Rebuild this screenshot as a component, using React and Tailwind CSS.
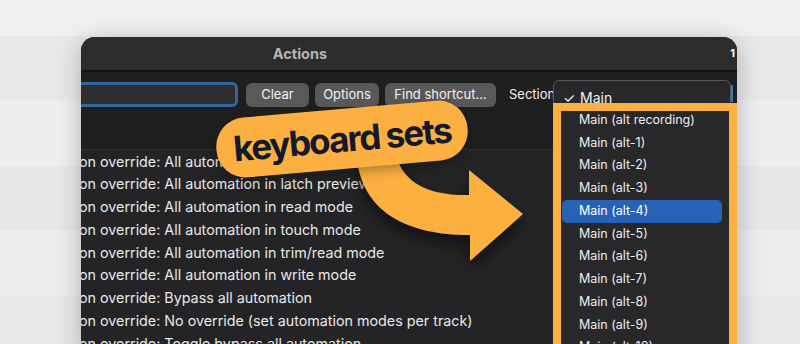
import React from "react";

const rows = [
  "on override: All automation in latch mode",
  "on override: All automation in latch preview mode",
  "on override: All automation in read mode",
  "on override: All automation in touch mode",
  "on override: All automation in trim/read mode",
  "on override: All automation in write mode",
  "on override: Bypass all automation",
  "on override: No override (set automation modes per track)",
  "on override: Toggle bypass all automation",
];

const sections = [
  "Main (alt recording)",
  "Main (alt-1)",
  "Main (alt-2)",
  "Main (alt-3)",
  "Main (alt-4)",
  "Main (alt-5)",
  "Main (alt-6)",
  "Main (alt-7)",
  "Main (alt-8)",
  "Main (alt-9)",
  "Main (alt-10)",
];

/* the button look on the toolbar */
function Btn({ w, children }) {
  return (
    <div
      className={`flex h-[24px] items-center justify-center rounded-[6px] bg-[#595959] text-[13px] text-[#f2f2f2] ${w}`}
    >
      {children}
    </div>
  );
}

export default function App() {
  return (
    <div className="relative h-[344px] w-[800px] overflow-hidden bg-[#ececef] font-[Inter,'Liberation_Sans',sans-serif]">
      {/* blurred table behind the window */}
      <div className="flex flex-col">
        <div className="h-[36px] bg-[#f0f0f2]" />
        <div className="h-[64px] bg-[#e8e8eb]" />
        <div className="h-[66px] bg-[#eeeef1]" />
        <div className="h-[64px] bg-[#e7e7ea]" />
        <div className="h-[66px] bg-[#ececef]" />
        <div className="h-[60px] bg-[#e8e8eb]" />
      </div>

      {/* window */}
      <div className="absolute left-[81px] top-[37px] flex h-[320px] w-[656px] flex-col overflow-hidden rounded-t-[14px] bg-[#242426] shadow-[0_4px_24px_rgba(0,0,0,0.25)]">
        <div className="flex h-[33px] shrink-0 items-center bg-[#2c2c2c]">
          <div className="w-[438px] text-center text-[14.5px] font-bold text-[#b4b4b4]">
            Actions
          </div>
          <div className="ml-auto mr-[2px] text-[11px] font-bold leading-none text-white">1</div>
        </div>
        <div className="h-[2px] shrink-0 bg-[#121212]" />

        {/* toolbar */}
        <div className="h-[77px] shrink-0 bg-[#1f1f1f] pt-[10px]">
          <div className="flex items-center">
            <div className="h-[25px] w-[157px] rounded-r-[6px] border-[3px] border-l-0 border-[#30679f] bg-[#2e2e2e]" />
            <div className="ml-[8px] flex gap-[6px]">
              <Btn w="w-[63px]">Clear</Btn>
              <Btn w="w-[64px]">Options</Btn>
              <Btn w="w-[111px]">Find shortcut...</Btn>
            </div>
            <div className="ml-[13px] text-[13px] text-[#f0f0f0]">Section</div>
          </div>
        </div>

        {/* action list */}
        <div className="flex flex-col border-t border-[#2e2e30] bg-[#242426]">
          {rows.map((r) => (
            <div
              key={r}
              className="flex h-[22.75px] items-center whitespace-nowrap text-[14.3px] text-[#e8e8e8]"
            >
              <span className="-ml-[2px]">{r}</span>
            </div>
          ))}
        </div>
      </div>

      {/* open section menu */}
      <div className="absolute left-[553px] top-[80px] h-[280px] w-[178px] rounded-[6px] border border-[#57575a] bg-[#28282a] pt-[5px]">
        <div className="flex h-[22.75px] items-center text-[14px] text-[#f2f2f2]">
          <span className="w-[26px] pl-[9px]">✓</span>
          <span>Main</span>
        </div>
        {sections.map((s) => (
          <div
            key={s}
            className={`mx-[8px] flex h-[22.75px] items-center rounded-[5px] pl-[17px] text-[12.5px] ${
              s === "Main (alt-4)" ? "bg-[#2662b6] text-white" : "text-[#eeeeee]"
            }`}
          >
            {s}
          </div>
        ))}
      </div>
      <div className="absolute left-[731px] top-[85px] h-[17px] w-[2px] rounded-full bg-[#2f7ae0]" />

      {/* highlight frame */}
      <div className="absolute left-[553px] top-[103px] h-[260px] w-[184px] border-[8px] border-[#fcb041]" />

      {/* curved arrow */}
      <svg
        className="pointer-events-none absolute left-0 top-0"
        width="800"
        height="344"
        viewBox="0 0 800 344"
      >
        <defs>
          <filter id="sh" x="-20%" y="-20%" width="150%" height="150%">
            <feDropShadow dx="0" dy="8" stdDeviation="8" floodColor="#000" floodOpacity="0.55" />
          </filter>
        </defs>
        <path
          d="M357 160 C364 214 410 235 470 235 L470 261 L523 214 L469 170 L469 195 C428 196 404 182 397 158 Z"
          fill="#fcb041"
          filter="url(#sh)"
        />
      </svg>

      {/* label pill */}
      <div className="absolute left-[216px] top-[109px] flex h-[60px] w-[252px] -rotate-[5deg] items-center justify-center rounded-[29px] bg-[#fcb041] shadow-[0_4px_12px_rgba(0,0,0,0.3)]">
        <span className="text-[35px] font-bold leading-none tracking-[-0.05em] text-[#141a2c]">
          keyboard<span className="ml-[6px]">sets</span>
        </span>
      </div>
    </div>
  );
}
